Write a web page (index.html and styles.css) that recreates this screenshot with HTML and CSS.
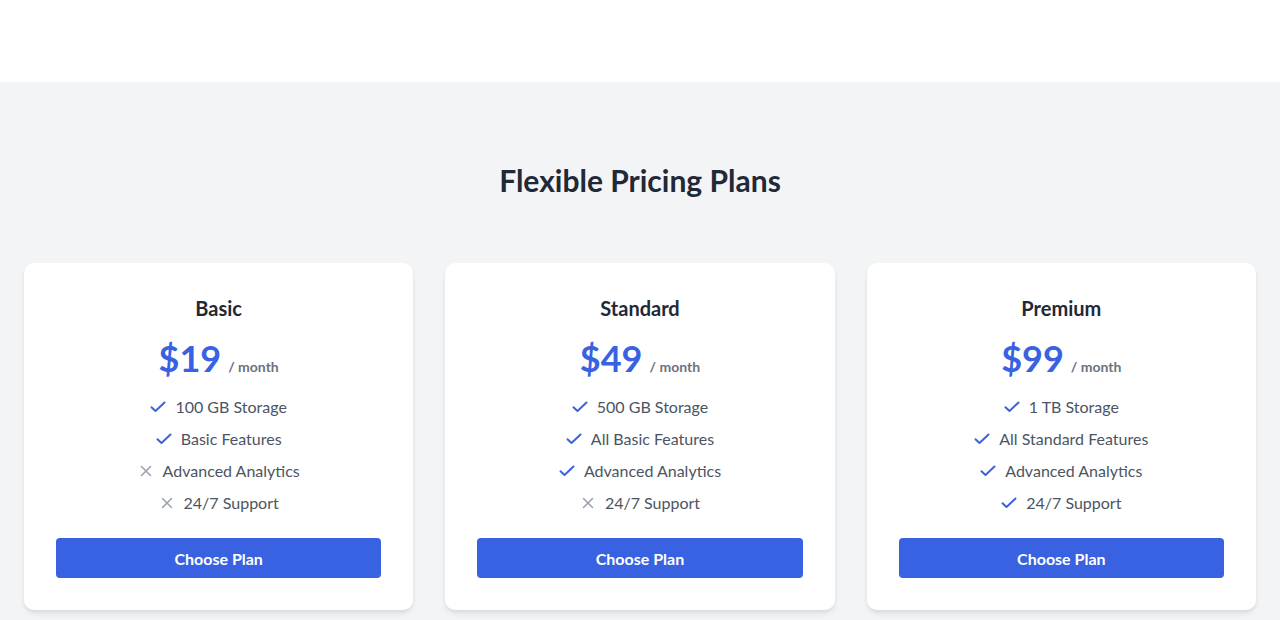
FILE: index.html
```html
<!DOCTYPE html>
<html lang="en">
<head>
<meta charset="utf-8">
<title>Pricing</title>
<link rel="stylesheet" href="styles.css">
</head>
<body>
<header class="topbar"></header>
<section class="pricing">
  <h2 class="pricing-title">Flexible Pricing Plans</h2>
  <div class="plans">
    <div class="card">
      <h3 class="plan-name">Basic</h3>
      <div class="price"><span class="amount">$19</span><span class="period">/ month</span></div>
      <ul class="features">
        <li><svg class="icon yes" viewBox="0 0 16 16"><path d="M1.5 8.2l4 3.8 9-8.5"/></svg><span>100 GB Storage</span></li>
        <li><svg class="icon yes" viewBox="0 0 16 16"><path d="M1.5 8.2l4 3.8 9-8.5"/></svg><span>Basic Features</span></li>
        <li><svg class="icon no" viewBox="0 0 16 16"><path d="M3.5 3.5l9 9M12.5 3.5l-9 9"/></svg><span>Advanced Analytics</span></li>
        <li><svg class="icon no" viewBox="0 0 16 16"><path d="M3.5 3.5l9 9M12.5 3.5l-9 9"/></svg><span>24/7 Support</span></li>
      </ul>
      <button class="choose">Choose Plan</button>
    </div>
    <div class="card">
      <h3 class="plan-name">Standard</h3>
      <div class="price"><span class="amount">$49</span><span class="period">/ month</span></div>
      <ul class="features">
        <li><svg class="icon yes" viewBox="0 0 16 16"><path d="M1.5 8.2l4 3.8 9-8.5"/></svg><span>500 GB Storage</span></li>
        <li><svg class="icon yes" viewBox="0 0 16 16"><path d="M1.5 8.2l4 3.8 9-8.5"/></svg><span>All Basic Features</span></li>
        <li><svg class="icon yes" viewBox="0 0 16 16"><path d="M1.5 8.2l4 3.8 9-8.5"/></svg><span>Advanced Analytics</span></li>
        <li><svg class="icon no" viewBox="0 0 16 16"><path d="M3.5 3.5l9 9M12.5 3.5l-9 9"/></svg><span>24/7 Support</span></li>
      </ul>
      <button class="choose">Choose Plan</button>
    </div>
    <div class="card">
      <h3 class="plan-name">Premium</h3>
      <div class="price"><span class="amount">$99</span><span class="period">/ month</span></div>
      <ul class="features">
        <li><svg class="icon yes" viewBox="0 0 16 16"><path d="M1.5 8.2l4 3.8 9-8.5"/></svg><span>1 TB Storage</span></li>
        <li><svg class="icon yes" viewBox="0 0 16 16"><path d="M1.5 8.2l4 3.8 9-8.5"/></svg><span>All Standard Features</span></li>
        <li><svg class="icon yes" viewBox="0 0 16 16"><path d="M1.5 8.2l4 3.8 9-8.5"/></svg><span>Advanced Analytics</span></li>
        <li><svg class="icon yes" viewBox="0 0 16 16"><path d="M1.5 8.2l4 3.8 9-8.5"/></svg><span>24/7 Support</span></li>
      </ul>
      <button class="choose">Choose Plan</button>
    </div>
  </div>
</section>
</body>
</html>
```
FILE: styles.css
```css
* { box-sizing: border-box; }
html, body { margin: 0; padding: 0; }
body {
  font-family: Lato, "Liberation Sans", sans-serif;
  background: #f3f4f6;
  color: #1f2937;
}
.topbar {
  height: 82px;
  background: #ffffff;
}
.pricing {
  padding: 80px 24px 40px;
}
.pricing-title {
  margin: 0 0 65px;
  text-align: center;
  font-size: 30px;
  line-height: 36px;
  font-weight: 700;
  color: #1f2937;
}
.plans {
  display: grid;
  grid-template-columns: repeat(3, 1fr);
  gap: 32px;
}
.card {
  background: #ffffff;
  border-radius: 10px;
  box-shadow: 0 4px 6px -1px rgba(0,0,0,0.09), 0 2px 4px -1px rgba(0,0,0,0.06);
  padding: 31px 32px 32px;
  text-align: center;
}
.plan-name {
  margin: 0 0 16px;
  font-size: 20px;
  line-height: 28px;
  font-weight: 700;
  color: #1f2937;
}
.price {
  display: flex;
  justify-content: center;
  align-items: baseline;
  line-height: 40px;
  margin-bottom: 8px;
}
.amount {
  font-size: 36px;
  font-weight: 700;
  color: #3862e2;
}
.period {
  margin-left: 7px;
  font-size: 14px;
  font-weight: 700;
  color: #6b7280;
}
.features {
  list-style: none;
  margin: 0 0 23px;
  padding: 0;
}
.features li {
  display: flex;
  justify-content: center;
  align-items: center;
  font-size: 16px;
  line-height: 24px;
  color: #4b5563;
  margin-bottom: 8px;
}
.features li:last-child { margin-bottom: 0; }
.icon {
  width: 16px;
  height: 16px;
  margin-right: 9px;
  fill: none;
  stroke-linecap: round;
  stroke-linejoin: round;
}
.icon.yes { stroke: #3862e2; stroke-width: 2; }
.icon.no { stroke: #9ca3af; stroke-width: 1.6; }
.choose {
  display: block;
  width: 100%;
  height: 40px;
  border: none;
  border-radius: 4px;
  background: #3862e2;
  color: #ffffff;
  font-family: Lato, "Liberation Sans", sans-serif;
  font-size: 16px;
  font-weight: 700;
  cursor: pointer;
}
```
